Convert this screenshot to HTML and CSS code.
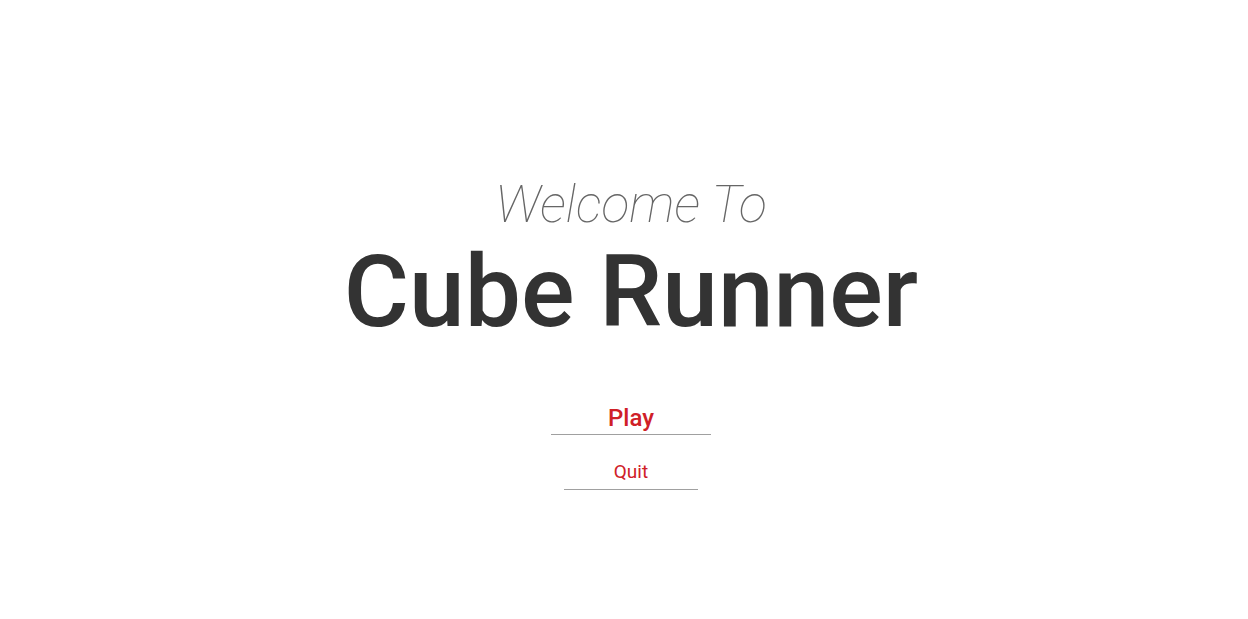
FILE: index.html
```html
<!DOCTYPE html>
<html>
<head>
<meta charset="utf-8">
<link rel="stylesheet" href="styles.css">
</head>
<body>
<main class="menu">
  <h2 class="welcome">Welcome To</h2>
  <h1 class="title">Cube Runner</h1>
  <nav class="buttons">
    <button class="btn btn-play">Play</button>
    <button class="btn btn-quit">Quit</button>
  </nav>
</main>
</body>
</html>
```
FILE: styles.css
```css
html, body {
  margin: 0;
  padding: 0;
  background: #ffffff;
  font-family: Roboto, "Liberation Sans", sans-serif;
}
.menu {
  display: flex;
  flex-direction: column;
  align-items: center;
  padding-top: 176px;
  padding-left: 14px;
}
.welcome {
  margin: 0;
  font-size: 52px;
  font-weight: 100;
  font-style: italic;
  color: #666666;
  line-height: 58px;
}
.title {
  margin: 0;
  font-size: 100px;
  font-weight: 500;
  color: #333333;
  line-height: 116px;
}
.buttons {
  display: flex;
  flex-direction: column;
  align-items: center;
  margin-top: 50px;
}
.btn {
  background: none;
  border: none;
  border-bottom: 1px solid #a0a0a0;
  font-family: Roboto, "Liberation Sans", sans-serif;
  color: #cf2027;
  cursor: pointer;
  padding: 0;
}
.btn-play {
  width: 160px;
  padding-top: 3px;
  font-size: 24px;
  font-weight: 500;
  line-height: 31px;
}
.btn-quit {
  width: 134px;
  margin-top: 20px;
  font-size: 19px;
  font-weight: 400;
  line-height: 34px;
}
```
